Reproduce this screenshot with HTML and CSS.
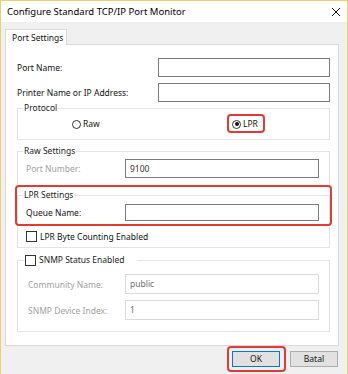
FILE: index.html
```html
<!DOCTYPE html>
<html lang="en">

<head>
    <title>Configure Standard TCP/IP Port Monitor</title>
    <link rel="stylesheet" href="styles.css">
</head>

<body>
    <div class="window">
        <div class="titlebar">
            <span class="title">Configure Standard TCP/IP Port Monitor</span>
            <svg class="close" width="10" height="10" viewBox="0 0 10 10">
                <path d="M1 1 L9 9 M9 1 L1 9" stroke="#111" stroke-width="1" fill="none"/>
            </svg>
        </div>

        <div class="content">
            <div class="tabs">
                <div class="tab">Port Settings</div>
            </div>

            <div class="panel">
                <div class="field-row">
                    <label>Port Name:</label>
                    <div class="input"></div>
                </div>
                <div class="field-row">
                    <label>Printer Name or IP Address:</label>
                    <div class="input"></div>
                </div>

                <div class="group protocol">
                    <span class="group-title">Protocol</span>
                    <div class="radios">
                        <div class="radio-item raw">
                            <span class="radio"></span>
                            <span>Raw</span>
                        </div>
                        <div class="radio-item lpr">
                            <span class="radio checked"></span>
                            <span>LPR</span>
                            <div class="highlight lpr-mark"></div>
                        </div>
                    </div>
                </div>

                <div class="group raw-settings">
                    <span class="group-title">Raw Settings</span>
                    <div class="sub-row">
                        <label class="disabled">Port Number:</label>
                        <div class="input">9100</div>
                    </div>
                </div>

                <div class="group lpr-settings">
                    <span class="group-title">LPR Settings</span>
                    <div class="sub-row queue">
                        <label>Queue Name:</label>
                        <div class="input"></div>
                    </div>
                    <div class="check-row">
                        <span class="checkbox"></span>
                        <span>LPR Byte Counting Enabled</span>
                    </div>
                    <div class="highlight lpr-box"></div>
                </div>

                <div class="group snmp">
                    <span class="group-title check-title">
                        <span class="checkbox"></span>
                        <span>SNMP Status Enabled</span>
                    </span>
                    <div class="sub-row snmp-row">
                        <label class="disabled">Community Name:</label>
                        <div class="input off">public</div>
                    </div>
                    <div class="sub-row snmp-row">
                        <label class="disabled">SNMP Device Index:</label>
                        <div class="input off">1</div>
                    </div>
                </div>
            </div>

            <div class="buttons">
                <div class="btn default">OK
                    <div class="highlight ok-mark"></div>
                </div>
                <div class="btn">Batal</div>
            </div>
        </div>
    </div>
</body>

</html>
```

FILE: styles.css
```css
body {
    margin: 0;
    padding: 0;
    background-color: #ffffff;
    font-family: "Noto Sans", Arial, sans-serif;
    font-size: 8.5px;
    color: #111;
}

.window {
    width: 348px;
    height: 374px;
    box-sizing: border-box;
    border: 1px solid #eccf72;
    border-bottom: none;
    background-color: #f0f0f0;
    display: flex;
    flex-direction: column;
}

.titlebar {
    flex-shrink: 0;
    height: 21px;
    background-color: #ffffff;
    display: flex;
    align-items: center;
    justify-content: space-between;
    padding: 0 6px 0 6px;
}

.title {
    font-size: 9.5px;
    color: #000;
}

.content {
    padding: 7px 8px 0 4px;
}

.tabs {
    display: flex;
    height: 15px;
}

.tab {
    width: 54px;
    border: 1px solid #d9d9d9;
    border-bottom: none;
    background-color: #ffffff;
    padding-left: 6px;
    line-height: 15px;
    position: relative;
    z-index: 1;
    margin-bottom: -1px;
}

.panel {
    height: 302px;
    box-sizing: border-box;
    border: 1px solid #d9d9d9;
    background-color: #ffffff;
    padding: 13px 8px 0 11px;
}

.field-row {
    display: flex;
    justify-content: space-between;
    align-items: center;
    height: 19px;
    margin-bottom: 6px;
}

.field-row .input {
    width: 166px;
    height: 17px;
}

.input {
    border: 1px solid #7a7a7a;
    background-color: #ffffff;
    box-sizing: content-box;
    padding-left: 4px;
    line-height: 17px;
    color: #333;
}

.input.off {
    border-color: #dadada;
    color: #6d6d6d;
}

.group {
    position: relative;
    border: 1px solid #e3e3e3;
    width: 311px;
}

.group-title {
    position: absolute;
    top: -7px;
    left: 5px;
    background-color: #ffffff;
    padding: 0 1px;
    line-height: 12px;
    color: #222;
}

.protocol {
    margin-top: 3px;
    height: 30px;
}

.radios {
    display: flex;
    align-items: center;
    height: 100%;
    padding-left: 54px;
}

.radio-item {
    display: flex;
    align-items: center;
    gap: 2px;
    line-height: 12px;
}

.radio-item.raw {
    width: 160px;
}

.radio-item.lpr {
    position: relative;
}

.radio {
    width: 7px;
    height: 7px;
    border: 1px solid #333;
    border-radius: 50%;
    display: flex;
    align-items: center;
    justify-content: center;
}

.radio.checked::after {
    content: "";
    width: 4px;
    height: 4px;
    border-radius: 50%;
    background-color: #111;
}

.highlight {
    position: absolute;
    border: 2px solid #e23b33;
    border-radius: 4px;
}

.lpr-mark {
    left: -5px;
    top: -4px;
    width: 34px;
    height: 15px;
}

.raw-settings {
    margin-top: 11px;
    height: 33px;
}

.sub-row {
    display: flex;
    justify-content: space-between;
    align-items: center;
    padding: 0 10px 0 8px;
}

.sub-row .input {
    width: 188px;
    height: 17px;
}

.raw-settings .sub-row {
    margin-top: 7px;
}

label.disabled {
    color: #a0a0a0;
}

.lpr-settings {
    margin-top: 9px;
    height: 51px;
}

.queue {
    margin-top: 8px;
}

.queue .input {
    height: 15px;
}

.check-row {
    display: flex;
    align-items: center;
    gap: 3px;
    padding-left: 8px;
    margin-top: 10px;
}

.checkbox {
    width: 9px;
    height: 9px;
    border: 1px solid #333;
    background-color: #ffffff;
    display: inline-block;
}

.lpr-box {
    left: -3px;
    top: -11px;
    width: 313px;
    height: 37px;
}

.snmp {
    margin-top: 12px;
    height: 70px;
}

.check-title {
    display: flex;
    align-items: center;
    gap: 3px;
    left: 7px;
    padding: 0 12px 0 0;
}

.snmp-row {
    padding-left: 10px;
}

.snmp-row:first-of-type {
    margin-top: 13px;
}

.snmp-row + .snmp-row {
    margin-top: 6px;
}

.snmp-row .input {
    height: 18px;
}

.buttons {
    display: flex;
    justify-content: flex-end;
    gap: 10px;
    margin-top: 5px;
    padding-right: 1px;
}

.btn {
    position: relative;
    width: 46px;
    height: 14px;
    border: 1px solid #adadad;
    background-color: #e1e1e1;
    text-align: center;
    line-height: 14px;
}

.btn.default {
    border-color: #0078d7;
}

.ok-mark {
    left: -6px;
    top: -6px;
    width: 55px;
    height: 22px;
}
```
